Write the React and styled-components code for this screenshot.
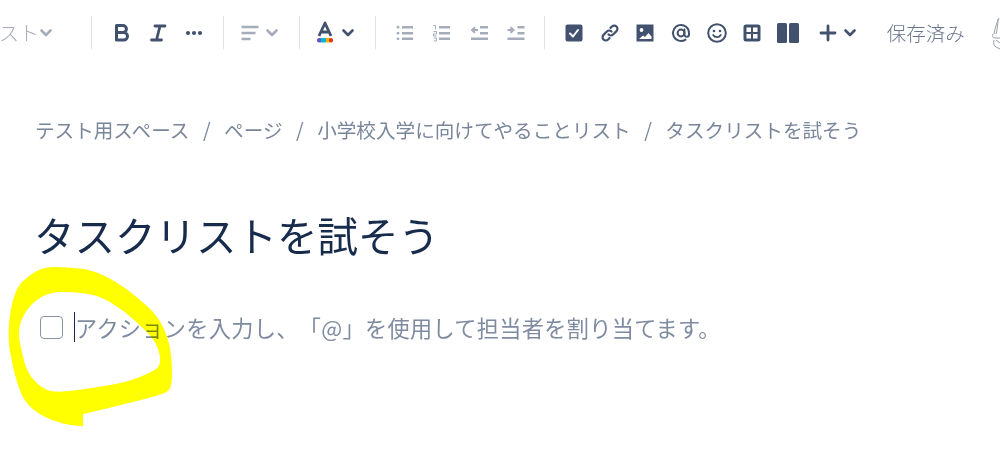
import React from "react";
import styled, { createGlobalStyle } from "styled-components";

const FONT = `"Noto Sans CJK JP", "Noto Sans", sans-serif`;
const NAVY = "#42526e";
const GREY = "#a5adba";

const OUTER = [
  [43, 267], [67, 267], [93, 270], [117, 282], [137, 297], [157, 315], [168, 337], [172, 360],
  [172, 390], [160, 395], [133, 402], [100, 410], [83, 414], [83, 414], [83, 426], [83, 426], [67, 425], [43, 417],
  [25, 403], [17, 383], [12, 363], [8, 340], [10, 310], [17, 287], [27, 277],
];
const INNER = [
  [50, 292], [77, 292], [100, 296], [123, 310], [143, 328], [157, 343], [162, 365], [150, 373],
  [127, 382], [93, 388], [55, 393], [40, 387], [27, 372], [22, 353], [18, 333], [22, 317], [33, 302],
];

// closed curve through the midpoints of a hand-traced outline
const smooth = (pts) => {
  const mid = (a, b) => [(a[0] + b[0]) / 2, (a[1] + b[1]) / 2];
  const start = mid(pts[pts.length - 1], pts[0]);
  const segs = pts.map((p, i) => {
    const m = mid(p, pts[(i + 1) % pts.length]);
    return `Q${p[0]} ${p[1]} ${m[0]} ${m[1]}`;
  });
  return `M${start[0]} ${start[1]}${segs.join("")}Z`;
};

const Chevron = ({ color = GREY }) => (
  <ChevronSvg width="14" height="14" viewBox="0 0 14 14">
    <path d="M2.5 4.5L7 9l4.5-4.5" fill="none" stroke={color} strokeWidth="2.6" strokeLinecap="round" strokeLinejoin="round" />
  </ChevronSvg>
);

const Lines = ({ children, d }) => (
  <svg width="22" height="18" viewBox="0 0 22 18">
    <path d={d} fill="none" stroke={GREY} strokeWidth="2.5" />
    {children}
  </svg>
);

const Bold = () => (
  <svg width="18" height="20" viewBox="0 0 18 20">
    <path d="M3.5 2.5h6.4a3.5 3.5 0 0 1 0 7H3.5zM3.5 9.5h7.2a3.8 3.8 0 0 1 0 7.6H3.5z" fill="none" stroke={NAVY} strokeWidth="3" strokeLinejoin="round" />
  </svg>
);

const Italic = () => (
  <svg width="18" height="20" viewBox="0 0 18 20">
    <path d="M6 3h10M2.5 17h10M11 3L7.5 17" fill="none" stroke={NAVY} strokeWidth="2.8" strokeLinecap="round" />
  </svg>
);

const More = () => (
  <svg width="18" height="18" viewBox="0 0 18 18" fill={NAVY}>
    <circle cx="3" cy="9" r="2.1" />
    <circle cx="9" cy="9" r="2.1" />
    <circle cx="15" cy="9" r="2.1" />
  </svg>
);

const TextColor = () => (
  <svg width="18" height="24" viewBox="0 0 18 24">
    <path d="M3 15L9 2l6 13M5 11h8" fill="none" stroke={NAVY} strokeWidth="2.8" strokeLinejoin="round" />
    <rect x="1" y="17" width="5" height="4.5" rx="2" fill="#6554c0" />
    <rect x="5" y="17" width="5" height="4.5" fill="#00b8d9" />
    <rect x="10" y="17" width="4" height="4.5" fill="#ffab00" />
    <rect x="13" y="17" width="4" height="4.5" rx="2" fill="#de350b" />
  </svg>
);

const Check = () => (
  <svg width="18" height="18" viewBox="0 0 18 18">
    <rect x="0.5" y="0.5" width="17" height="17" rx="2" fill={NAVY} />
    <path d="M5 9.5l3 3 5-6.5" fill="none" stroke="#fff" strokeWidth="2" strokeLinecap="round" strokeLinejoin="round" />
  </svg>
);

const LinkIcon = () => (
  <svg width="20" height="20" viewBox="0 0 20 20" fill="none" stroke={NAVY} strokeWidth="2.2" strokeLinecap="round">
    <path d="M8.5 11.5a3.2 3.2 0 0 0 4.6 0l3.4-3.4a3.2 3.2 0 0 0-4.6-4.6L10.5 4.9" />
    <path d="M11.5 8.5a3.2 3.2 0 0 0-4.6 0l-3.4 3.4a3.2 3.2 0 0 0 4.6 4.6l1.4-1.4" />
  </svg>
);

const ImageIcon = () => (
  <svg width="18" height="18" viewBox="0 0 18 18">
    <rect x="0.5" y="0.5" width="17" height="17" fill={NAVY} />
    <circle cx="5.5" cy="6" r="1.9" fill="#fff" />
    <path d="M3 15l4-3.5 2 1.5 3.5-4 3 3.5V15z" fill="#fff" />
  </svg>
);

const Mention = () => (
  <svg width="20" height="20" viewBox="0 0 20 20" fill="none" stroke={NAVY} strokeWidth="2">
    <circle cx="10" cy="10" r="3.4" />
    <path d="M13.4 6.5v5a2.3 2.3 0 0 0 4.6 0V10a8 8 0 1 0-3.5 6.6" strokeLinecap="round" />
  </svg>
);

const Emoji = () => (
  <svg width="20" height="20" viewBox="0 0 20 20">
    <circle cx="10" cy="10" r="8.8" fill="none" stroke={NAVY} strokeWidth="2" />
    <circle cx="7" cy="8" r="1.3" fill={NAVY} />
    <circle cx="13" cy="8" r="1.3" fill={NAVY} />
    <path d="M6.2 12a4.4 4.4 0 0 0 7.6 0" fill="none" stroke={NAVY} strokeWidth="1.8" strokeLinecap="round" />
  </svg>
);

const TableIcon = () => (
  <svg width="18" height="18" viewBox="0 0 18 18">
    <rect x="0.5" y="0.5" width="17" height="17" rx="2.5" fill={NAVY} />
    <path d="M3.5 3.5h4.5v4.5H3.5zM10 3.5h4.5v4.5H10zM3.5 10h4.5v4.5H3.5zM10 10h4.5v4.5H10z" fill="#fff" />
  </svg>
);

const Columns = () => (
  <svg width="24" height="20" viewBox="0 0 24 20" fill={NAVY}>
    <rect x="1" y="0" width="10" height="20" rx="1.5" />
    <rect x="13" y="0" width="10" height="20" rx="1.5" />
  </svg>
);

const Plus = () => (
  <svg width="18" height="18" viewBox="0 0 18 18">
    <path d="M9 2v14M2 9h14" fill="none" stroke={NAVY} strokeWidth="2.8" strokeLinecap="round" />
  </svg>
);

const Avatar = () => (
  <svg width="8" height="34" viewBox="0 0 8 34" fill="none" stroke="#9aa0a8" strokeWidth="1">
    <path d="M7 2C5 6 3 12 2 18M6 3C6 9 5 14 4 18M1 18c-1 2 0 4 2 4h5M2 24c-1 3 0 6 2 7l4 2M4 24l4 3" />
  </svg>
);

const App = () => (
  <Page>
    <GlobalStyle />
    <Toolbar>
      <StyleMenu>
        <MutedLabel>テキスト</MutedLabel>
        <Chevron />
      </StyleMenu>
      <Divider />
      <Group $l={12} $r={11}>
        <IconButton $w={36}><Bold /></IconButton>
        <IconButton $w={36}><Italic /></IconButton>
        <IconButton $w={36}><More /></IconButton>
      </Group>
      <Divider />
      <Group $l={13} $r={18}>
        <IconButton $w={26}>
          <Lines d="M2.5 3h17M2.5 9h14M2.5 15h9" />
        </IconButton>
        <IconButton $w={18}><Chevron /></IconButton>
      </Group>
      <Divider />
      <Group $l={14} $r={15}>
        <IconButton $w={22}><TextColor /></IconButton>
        <IconButton $w={24}><Chevron color={NAVY} /></IconButton>
      </Group>
      <Divider />
      <Group $l={11} $r={10}>
        <IconButton $w={36.75}>
          <Lines d="M8 3.2h11M8 9.2h11M8 14.8h11">
            <circle cx="4" cy="3.2" r="1.4" fill={GREY} />
            <circle cx="4" cy="9.2" r="1.4" fill={GREY} />
            <circle cx="4" cy="14.8" r="1.4" fill={GREY} />
          </Lines>
        </IconButton>
        <IconButton $w={36.75}>
          <Lines d="M8 3.2h11M8 9.2h11M8 14.8h11">
            <path d="M2.5 1.5h2v4M2.5 7.5h3v2.5h-3v2h3M2.5 14h3v3h-3" fill="none" stroke={GREY} strokeWidth="1" />
          </Lines>
        </IconButton>
        <IconButton $w={36.75}>
          <Lines d="M12 3.2h8M12 9.2h8M3 14.8h17">
            <path d="M10 6H4.5M7 3.2L4 6l3 2.8" fill="none" stroke={GREY} strokeWidth="2" />
          </Lines>
        </IconButton>
        <IconButton $w={36.75}>
          <Lines d="M12.5 3.2h7M12.5 9.2h7M2.5 14.8h17">
            <path d="M2.5 6H8M5.5 3.2L8.5 6l-3 2.8" fill="none" stroke={GREY} strokeWidth="2" />
          </Lines>
        </IconButton>
      </Group>
      <Divider />
      <Group $l={11} $r={0}>
        <IconButton $w={35.7}><Check /></IconButton>
        <IconButton $w={35.7}><LinkIcon /></IconButton>
        <IconButton $w={35.7}><ImageIcon /></IconButton>
        <IconButton $w={35.7}><Mention /></IconButton>
        <IconButton $w={35.7}><Emoji /></IconButton>
        <IconButton $w={35.7}><TableIcon /></IconButton>
        <IconButton $w={35.7}><Columns /></IconButton>
        <IconButton $w={18} $ml={13}><Plus /></IconButton>
        <IconButton $w={14} $ml={6}><Chevron color={NAVY} /></IconButton>
      </Group>
      <SaveState>保存済み</SaveState>
      <AvatarSlot><Avatar /></AvatarSlot>
    </Toolbar>

    <Content>
      <Breadcrumbs>
        <span>テスト用スペース</span>
        <Slash>/</Slash>
        <span>ページ</span>
        <Slash>/</Slash>
        <span>小学校入学に向けてやることリスト</span>
        <Slash>/</Slash>
        <span>タスクリストを試そう</span>
      </Breadcrumbs>
      <Title>タスクリストを試そう</Title>
      <TaskRow>
        <Checkbox />
        <Caret />
        <Placeholder>アクションを入力し、「@」を使用して担当者を割り当てます。</Placeholder>
      </TaskRow>
    </Content>

    <Scribble viewBox="0 0 1000 463">
      <path d={`${smooth(OUTER)}${smooth(INNER)}`} fill="#ffff00" fillRule="evenodd" />
    </Scribble>
  </Page>
);

const GlobalStyle = createGlobalStyle`
  html, body {
    margin: 0;
    background: #fff;
    font-family: ${FONT};
    text-spacing-trim: space-all;
  }
`;

const Page = styled.div`
  position: relative;
  width: 1000px;
  height: 463px;
  overflow: hidden;
  background: #fff;
`;

const Toolbar = styled.div`
  display: flex;
  align-items: center;
  height: 65px;
`;

const StyleMenu = styled.div`
  display: flex;
  align-items: center;
  justify-content: flex-end;
  flex: none;
  width: 53px;
  margin-right: 38px;
  overflow: hidden;
`;

const ChevronSvg = styled.svg`
  flex: none;
`;

const MutedLabel = styled.span`
  flex: none;
  font-size: 20px;
  font-weight: 300;
  color: ${GREY};
  white-space: nowrap;
`;

const Divider = styled.div`
  flex: none;
  width: 1px;
  height: 33px;
  background: #dfe1e6;
`;

const Group = styled.div`
  display: flex;
  align-items: center;
  flex: none;
  padding: 0 ${(p) => p.$r}px 0 ${(p) => p.$l}px;
`;

const IconButton = styled.div`
  display: flex;
  align-items: center;
  justify-content: center;
  flex: none;
  width: ${(p) => p.$w}px;
  height: 32px;
  margin-left: ${(p) => p.$ml || 0}px;
`;

const SaveState = styled.span`
  flex: none;
  margin-left: 30px;
  font-size: 19.5px;
  font-weight: 300;
  color: #6b778c;
  white-space: nowrap;
`;

const AvatarSlot = styled.div`
  display: flex;
  flex: none;
  margin-left: 27px;
`;

const Content = styled.div`
  padding: 48px 0 0 35px;
`;

const Breadcrumbs = styled.div`
  display: flex;
  align-items: center;
  height: 32px;
  font-size: 19.6px;
  font-weight: 400;
  color: #7a869a;
  white-space: nowrap;
`;

const Slash = styled.span`
  margin: 0 13.5px;
`;

const Title = styled.h1`
  margin: 59px 0 0 -1px;
  height: 62px;
  line-height: 62px;
  font-size: 40.5px;
  font-weight: 400;
  color: #172b4d;
  white-space: nowrap;
`;

const TaskRow = styled.div`
  display: flex;
  align-items: center;
  height: 32px;
  margin-top: 45px;
  margin-left: 5px;
`;

const Checkbox = styled.div`
  flex: none;
  width: 23px;
  height: 23px;
  box-sizing: border-box;
  border: 1.5px solid #8993a4;
  border-radius: 4px;
`;

const Caret = styled.div`
  flex: none;
  width: 1px;
  height: 30px;
  margin-left: 11px;
  background: #172b4d;
`;

const Placeholder = styled.span`
  font-size: 22.2px;
  letter-spacing: 0.3px;
  font-weight: 400;
  color: #7f8ba0;
  white-space: nowrap;
`;

const Scribble = styled.svg`
  position: absolute;
  top: 0;
  left: 0;
  width: 1000px;
  height: 463px;
  mix-blend-mode: multiply;
  pointer-events: none;
`;

export default App;
